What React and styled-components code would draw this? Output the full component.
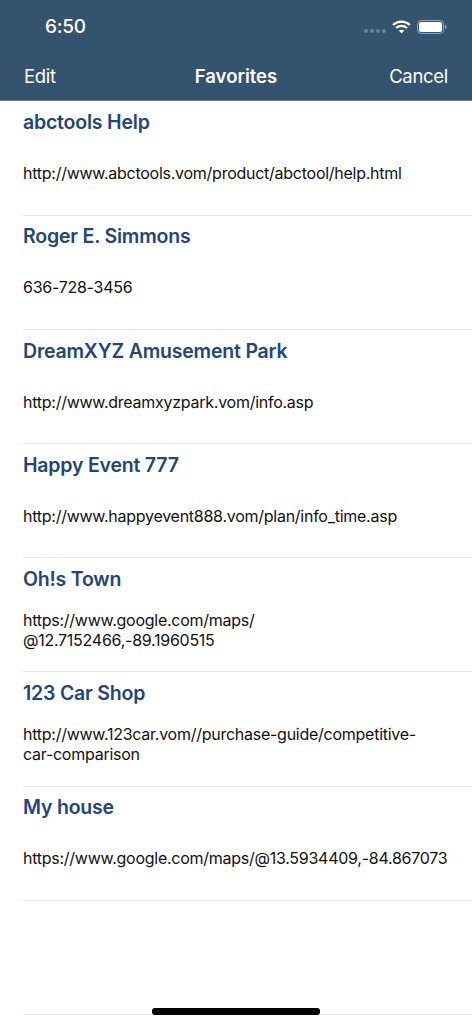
import React from "react";
import styled, { createGlobalStyle } from "styled-components";

const favorites = [
  { name: "abctools Help", value: "http://www.abctools.vom/product/abctool/help.html" },
  { name: "Roger E. Simmons", value: "636-728-3456" },
  { name: "DreamXYZ Amusement Park", value: "http://www.dreamxyzpark.vom/info.asp" },
  { name: "Happy Event 777", value: "http://www.happyevent888.vom/plan/info_time.asp" },
  { name: "Oh!s Town", value: "https://www.google.com/maps/\n@12.7152466,-89.1960515" },
  { name: "123 Car Shop", value: "http://www.123car.vom//purchase-guide/competitive-\ncar-comparison" },
  { name: "My house", value: "https://www.google.com/maps/@13.5934409,-84.867073" },
];

const Global = createGlobalStyle`
  html, body {
    margin: 0;
    padding: 0;
    background: #fff;
    font-family: Inter, "Liberation Sans", sans-serif;
  }
`;

const Screen = styled.div`
  position: relative;
  width: 472px;
  height: 1024px;
  overflow: hidden;
  background: #fff;
`;

const Header = styled.header`
  height: 101px;
  box-sizing: border-box;
  background: #33536f;
  border-bottom: 1px solid #5f7a91;
  color: #fff;
  display: flex;
  flex-direction: column;
`;

const StatusBar = styled.div`
  height: 53px;
  display: flex;
  align-items: center;
  justify-content: space-between;
  padding: 0 25px 0 45px;
`;

const Time = styled.span`
  font-size: 19px;
  font-weight: 500;
  letter-spacing: -0.2px;
`;

const StatusIcons = styled.div`
  display: flex;
  align-items: center;
  gap: 6px;
`;

const Dots = styled.div`
  display: flex;
  gap: 2px;
  margin-top: 9px;
`;

const Dot = styled.i`
  width: 4px;
  height: 4px;
  border-radius: 50%;
  background: #6c8499;
`;

const NavBar = styled.nav`
  height: 45px;
  display: flex;
  align-items: center;
  justify-content: space-between;
  padding: 0 24px;
  position: relative;
`;

const NavButton = styled.span`
  font-size: 18.5px;
  font-weight: 400;
  letter-spacing: -0.3px;
`;

const NavTitle = styled.h1`
  position: absolute;
  left: 0;
  right: 0;
  margin: 0;
  text-align: center;
  font-size: 18.5px;
  font-weight: 600;
`;

const List = styled.ul`
  list-style: none;
  margin: 0;
  padding: 0.5px 0 0 23px;
`;

const Row = styled.li`
  height: 114.2px;
  box-sizing: border-box;
  border-bottom: 1px solid #e8e8e8;
  position: relative;
`;

const Name = styled.div`
  padding-top: 8.8px;
  font-size: 19.5px;
  line-height: 24px;
  font-weight: 600;
  letter-spacing: -0.2px;
  color: #23457c;
`;

const Value = styled.div`
  position: absolute;
  top: 51.7px;
  left: 0;
  right: 22px;
  height: 40px;
  display: flex;
  align-items: center;
  font-size: 16px;
  line-height: 20px;
  letter-spacing: -0.26px;
  white-space: pre-line;
  color: #111;
`;

const EmptyRow = styled.div`
  height: 114.2px;
  box-sizing: border-box;
  border-bottom: 1px solid #e8e8e8;
`;

const HomeIndicator = styled.div`
  position: absolute;
  left: 152px;
  bottom: 9.5px;
  width: 168px;
  height: 6.5px;
  border-radius: 3px;
  background: #000;
`;

function Wifi() {
  return (
    <svg width="19" height="14" viewBox="0 0 19 14" fill="none" stroke="#fff" strokeWidth="2.2">
      <path d="M1 5 C6 0.4 13 0.4 18 5" />
      <path d="M4 8 C7.2 5.2 11.8 5.2 15 8" />
      <path d="M9.5 13.5 L6.8 10.6 C8.4 9.4 10.6 9.4 12.2 10.6 Z" fill="#fff" stroke="none" />
    </svg>
  );
}

function Battery() {
  return (
    <svg width="30" height="14" viewBox="0 0 30 14">
      <rect x="0.5" y="0.5" width="26" height="13" rx="3.5" fill="none" stroke="#8fa3b4" />
      <rect x="2" y="2" width="23" height="10" rx="2" fill="#fff" />
      <path d="M28 4.5 C29.2 5 29.6 6 29.6 7 C29.6 8 29.2 9 28 9.5 Z" fill="#8fa3b4" />
    </svg>
  );
}

export default function App() {
  return (
    <Screen>
      <Global />
      <Header>
        <StatusBar>
          <Time>6:50</Time>
          <StatusIcons>
            <Dots>
              <Dot /><Dot /><Dot /><Dot />
            </Dots>
            <Wifi />
            <Battery />
          </StatusIcons>
        </StatusBar>
        <NavBar>
          <NavButton>Edit</NavButton>
          <NavTitle>Favorites</NavTitle>
          <NavButton>Cancel</NavButton>
        </NavBar>
      </Header>
      <List>
        {favorites.map((item, index) => (
          <Row key={index}>
            <Name>{item.name}</Name>
            <Value><span>{item.value}</span></Value>
          </Row>
        ))}
        <EmptyRow />
      </List>
      <HomeIndicator />
    </Screen>
  );
}
